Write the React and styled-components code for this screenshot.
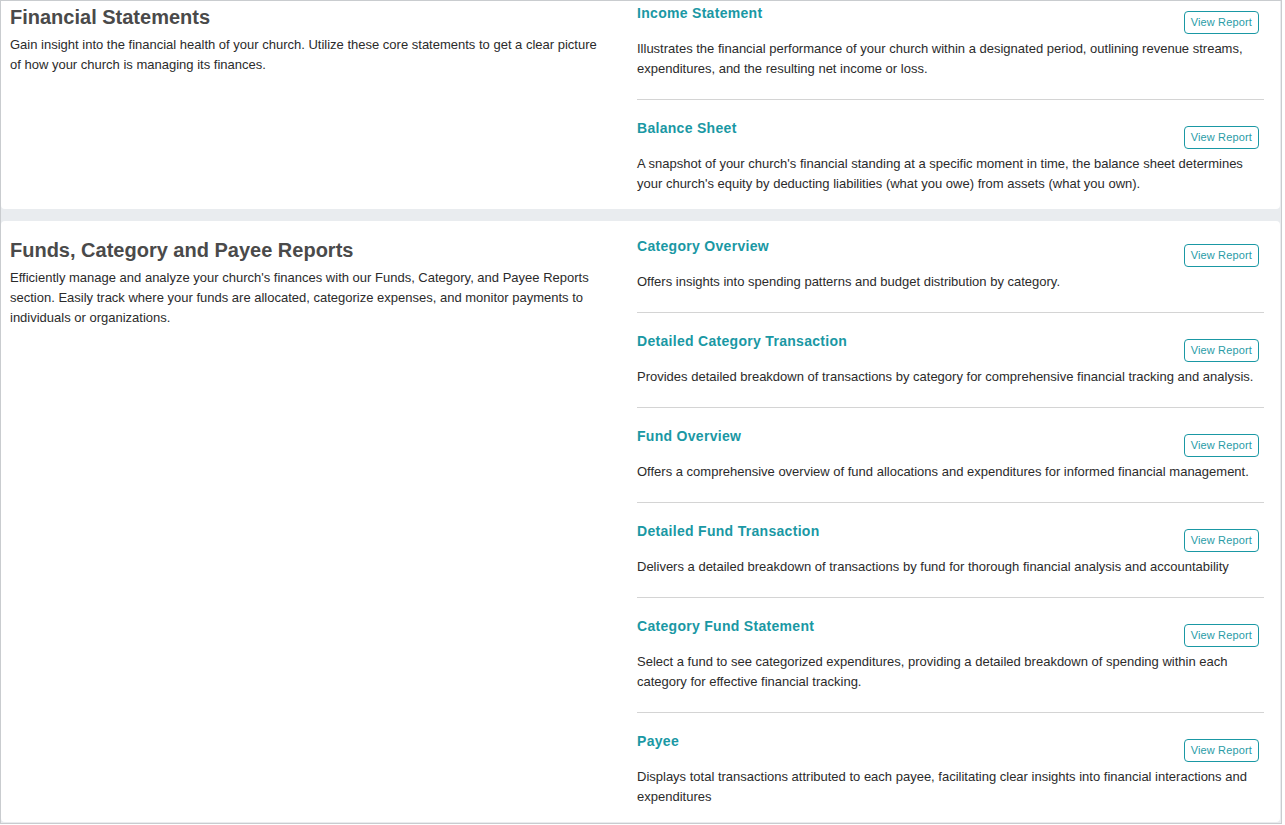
import React from "react";
import styled, { createGlobalStyle } from "styled-components";

const Global = createGlobalStyle`
  html, body { margin: 0; padding: 0; background: #ffffff; }
  body { font-family: "Liberation Sans", Arial, sans-serif; }
  * { box-sizing: border-box; }
`;

const Frame = styled.div`
  width: 1282px;
  height: 824px;
  border: 1px solid #c9cccf;
  background: #e9ecef;
  padding: 0 1px 1px 0;
  overflow: hidden;
  display: flex;
  flex-direction: column;
  gap: 12px;
`;

const Card = styled.section`
  background: #ffffff;
  border-radius: 4px;
  padding: 15px 16px 15px 9px;
  display: grid;
  grid-template-columns: 594px 1fr;
  column-gap: 33px;
  align-items: start;
  margin-top: ${(p) => (p.$scrolled ? "-13px" : "0")};
`;

const Intro = styled.div`
  display: flex;
  flex-direction: column;
`;

const SectionTitle = styled.h2`
  margin: 0;
  font-size: 20px;
  line-height: 28px;
  font-weight: 700;
  color: #4a4a4a;
`;

const SectionText = styled.p`
  margin: 4px 0 0;
  font-size: 13px;
  line-height: 20px;
  color: #2b2b2b;
`;

const ReportList = styled.div`
  display: flex;
  flex-direction: column;
`;

const Report = styled.div`
  padding: 18px 0 20px;
  border-bottom: 1px solid #d4d4d4;
  &:first-child { padding-top: 0; }
  &:last-child { border-bottom: none; padding-bottom: 0; }
`;

const ReportHead = styled.div`
  display: flex;
  justify-content: space-between;
  align-items: flex-start;
`;

const ReportTitle = styled.h3`
  margin: 0;
  font-size: 14px;
  letter-spacing: 0.3px;
  line-height: 20px;
  font-weight: 700;
  color: #1a98a4;
`;

const ViewButton = styled.button`
  margin: 8px 5px 0 0;
  height: 23px;
  padding: 0 6px;
  font-family: "Liberation Sans", Arial, sans-serif;
  font-size: 11px;
  letter-spacing: 0.15px;
  line-height: 21px;
  color: #2a9ca7;
  background: #ffffff;
  border: 1px solid #1a98a4;
  border-radius: 4px;
  cursor: pointer;
`;

const ReportText = styled.p`
  margin: 5px 0 0;
  font-size: 13px;
  line-height: 20px;
  color: #2b2b2b;
`;

const sections = [
  {
    title: "Financial Statements",
    text:
      "Gain insight into the financial health of your church. Utilize these core statements to get a clear picture of how your church is managing its finances.",
    scrolled: true,
    reports: [
      {
        name: "Income Statement",
        text:
          "Illustrates the financial performance of your church within a designated period, outlining revenue streams, expenditures, and the resulting net income or loss.",
      },
      {
        name: "Balance Sheet",
        text:
          "A snapshot of your church's financial standing at a specific moment in time, the balance sheet determines your church's equity by deducting liabilities (what you owe) from assets (what you own).",
      },
    ],
  },
  {
    title: "Funds, Category and Payee Reports",
    text:
      "Efficiently manage and analyze your church's finances with our Funds, Category, and Payee Reports section. Easily track where your funds are allocated, categorize expenses, and monitor payments to individuals or organizations.",
    reports: [
      {
        name: "Category Overview",
        text: "Offers insights into spending patterns and budget distribution by category.",
      },
      {
        name: "Detailed Category Transaction",
        text:
          "Provides detailed breakdown of transactions by category for comprehensive financial tracking and analysis.",
      },
      {
        name: "Fund Overview",
        text:
          "Offers a comprehensive overview of fund allocations and expenditures for informed financial management.",
      },
      {
        name: "Detailed Fund Transaction",
        text:
          "Delivers a detailed breakdown of transactions by fund for thorough financial analysis and accountability",
      },
      {
        name: "Category Fund Statement",
        text:
          "Select a fund to see categorized expenditures, providing a detailed breakdown of spending within each category for effective financial tracking.",
      },
      {
        name: "Payee",
        text:
          "Displays total transactions attributed to each payee, facilitating clear insights into financial interactions and expenditures",
      },
    ],
  },
];

export default function App() {
  return (
    <>
      <Global />
      <Frame>
        {sections.map((s) => (
          <Card key={s.title} $scrolled={s.scrolled}>
            <Intro>
              <SectionTitle>{s.title}</SectionTitle>
              <SectionText>{s.text}</SectionText>
            </Intro>
            <ReportList>
              {s.reports.map((r) => (
                <Report key={r.name}>
                  <ReportHead>
                    <ReportTitle>{r.name}</ReportTitle>
                    <ViewButton type="button">View Report</ViewButton>
                  </ReportHead>
                  <ReportText>{r.text}</ReportText>
                </Report>
              ))}
            </ReportList>
          </Card>
        ))}
      </Frame>
    </>
  );
}
